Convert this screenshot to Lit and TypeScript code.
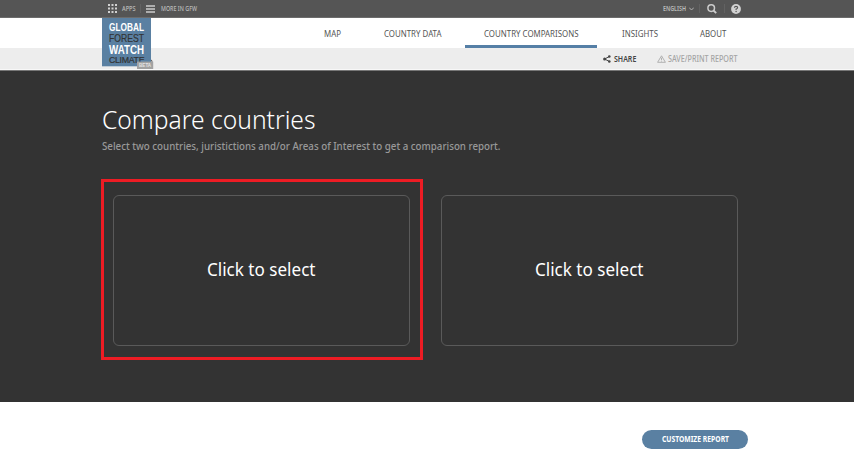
import { LitElement, html, css } from "lit";
import { customElement, property } from "lit/decorators.js";
import { classMap } from "lit/directives/class-map.js";

const TABS = [
  { label: "MAP", cls: "map", width: 17 },
  { label: "COUNTRY DATA", cls: "data", width: 57.5 },
  { label: "COUNTRY COMPARISONS", cls: "compare", width: 94.5 },
  { label: "INSIGHTS", cls: "insights", width: 36 },
  { label: "ABOUT", cls: "about", width: 26.3 },
];

/* One line of text set to a fixed measure; size, weight and colour are inherited. */
@customElement("fit-text")
class FitText extends LitElement {
  static styles = css`
    :host { display: block; flex: none; }
    svg { display: block; overflow: visible; height: 1.4em; }
    text { fill: currentColor; }
  `;
  @property() text = "";
  @property({ type: Number }) measure = 0;
  render() {
    return html`<svg width=${this.measure}><text x="0" y="1.06em" textLength=${this.measure} lengthAdjust="spacingAndGlyphs">${this.text}</text></svg>`;
  }
}

@customElement("gfw-header")
class GfwHeader extends LitElement {
  static styles = css`
    :host { display: block; position: relative; }
    .top { box-sizing: border-box; height: 18px; background: #555; border-bottom: 1px solid #6c6c6c; display: flex; align-items: center; padding: 0 113px 0 108px; color: #bcbcbc; font-size: 6.2px; font-weight: 500; }
    svg { display: block; flex: none; }
    .apps { margin-left: 5.2px; }
    .menu { margin-left: 5.5px; }
    .more { margin-left: 6px; }
    .lang { margin-left: auto; font-weight: 600; }
    .chev { margin: 0 5px 0 3px; }
    .sep { width: 1px; height: 9px; background: #626262; }
    .sep.first { margin-left: 4.3px; }
    .search { margin: 0 7px; }
    .help { margin-left: 6px; }
    .nav { height: 30px; background: #fff; display: flex; padding-left: 305px; gap: 5px; }
    .tab { box-sizing: border-box; display: flex; align-items: center; justify-content: center; height: 30px; font-size: 8.8px; color: #555; border-bottom: 3px solid transparent; padding-top: 4.5px; }
    .map { width: 54px; } .data { width: 96px; margin-left: 1px; } .compare { width: 132px; margin-left: -1px; } .insights { width: 75px; } .about { width: 63px; }
    .active { border-color: #557fa6; }
    .sub { box-sizing: border-box; height: 23px; background: #ededed; border-bottom: 1px solid #777; box-shadow: inset 0 -1px #f8f8f8; display: flex; align-items: center; padding-left: 603px; font-size: 8px; font-weight: 600; color: #444; }
    .share { margin: 0.5px 0 0 2.5px; }
    .warn { margin: 0 2px 0 21px; }
    .save { color: #a4a4a4; font-weight: 500; margin-top: 0.5px; }
    .logo { position: absolute; left: 102px; top: 18px; overflow: visible; }
  `;
  render() {
    return html`
      <div class="top">
        <svg width="9" height="9" viewBox="0 0 9 9">
          <path d="M1 0V9M4.5 0V9M8 0V9" stroke="#d2d2d2" stroke-width="2" stroke-dasharray="2 1.5"/>
        </svg>
        <fit-text class="apps" text="APPS" measure="13.5"></fit-text>
        <i class="sep first"></i>
        <svg class="menu" width="9" height="8"><path d="M0 1h9M0 4h9M0 7h9" stroke="#ccc" stroke-width="1.6"/></svg>
        <fit-text class="more" text="MORE IN GFW" measure="36"></fit-text>
        <fit-text class="lang" text="ENGLISH" measure="23"></fit-text>
        <svg class="chev" width="5" height="4"><path d="M.2 .6L2.5 3L4.8 .6" fill="none" stroke="#bbb" stroke-width=".9"/></svg>
        <i class="sep"></i>
        <svg class="search" width="10" height="10"><circle cx="4.2" cy="4.1" r="3.3" fill="none" stroke="#ccc" stroke-width="1.5"/><path d="M6.5 6.5L9.2 9.2" stroke="#ccc" stroke-width="1.8"/></svg>
        <i class="sep"></i>
        <svg class="help" width="10" height="10"><circle cx="5" cy="5" r="4.9" fill="#d2d2d2"/><path d="M3.4 3.8Q3.5 2.4 5 2.4Q6.6 2.4 6.6 3.7Q6.6 4.5 5.1 5.1V6" fill="none" stroke="#555" stroke-width="1.1"/><circle cx="5.1" cy="7.5" r=".7" fill="#555"/></svg>
      </div>
      <div class="nav">
        ${TABS.map((t) => html`<div class=${classMap({ tab: true, [t.cls]: true, active: t.cls === "compare" })}><fit-text .text=${t.label} .measure=${t.width}></fit-text></div>`)}
      </div>
      <div class="sub">
        <svg width="8" height="8"><path d="M6.3 1.5L1.7 4L6.3 6.5" fill="none" stroke="#444" stroke-width="1"/><circle cx="6.3" cy="1.5" r="1.3" fill="#444"/><circle cx="1.6" cy="4" r="1.5" fill="#444"/><circle cx="6.3" cy="6.5" r="1.3" fill="#444"/></svg>
        <fit-text class="share" text="SHARE" measure="22.3"></fit-text>
        <svg class="warn" width="9" height="8"><path d="M4.5 .8L8.4 7.3H.6Z" fill="none" stroke="#aaa" stroke-width=".9" stroke-linejoin="round"/><path d="M4.5 2.7V5M4.5 5.7V6.5" stroke="#aaa" stroke-width=".9"/></svg>
        <fit-text class="save" text="SAVE/PRINT REPORT" measure="69.5"></fit-text>
      </div>
      <svg class="logo" width="53" height="52" viewBox="0 0 53 52" font-family="Liberation Sans, sans-serif">
        <rect width="49" height="48.3" fill="#5a80a2"/>
        <text x="7" y="13.3" font-size="11.3" font-weight="700" fill="#fff" textLength="35" lengthAdjust="spacingAndGlyphs">GLOBAL</text>
        <text x="7" y="24" font-size="11.4" fill="#333" stroke="#333" stroke-width=".2" textLength="35" lengthAdjust="spacingAndGlyphs">FOREST</text>
        <text x="7" y="36" font-size="12.4" font-weight="700" fill="#fff" textLength="35" lengthAdjust="spacingAndGlyphs">WATCH</text>
        <text x="7" y="44.6" font-size="8.8" font-family="Liberation Sans Narrow, Liberation Sans, sans-serif" fill="#333" stroke="#333" stroke-width=".2" textLength="35.5">CLIMATE</text>
        <path d="M49 41.5L51 43.5H49Z" fill="#555"/>
        <rect x="35" y="43.6" width="16.2" height="7.4" fill="#a2a2a2"/>
        <text x="37" y="49.4" font-size="5.8" font-weight="700" fill="#e4e4e4" textLength="12.2" lengthAdjust="spacingAndGlyphs">BETA</text>
      </svg>`;
  }
}

@customElement("country-card")
class CountryCard extends LitElement {
  static styles = css`
    :host { box-sizing: border-box; display: flex; align-items: center; justify-content: center; width: 297px; height: 151px; border: 1px solid #5a5a5a; border-radius: 6px; color: #fff; font-size: 17.8px; padding-bottom: 3px; }
  `;
  render() {
    return html`<fit-text text="Click to select" measure="108.5"></fit-text>`;
  }
}

@customElement("app-root")
class AppRoot extends LitElement {
  static styles = css`
    :host { display: flex; flex-direction: column; height: 470px; background: #fff; font-family: "Noto Sans", "Open Sans", sans-serif; overflow: hidden; }
    .main { position: relative; box-sizing: border-box; height: 331px; background: #333; padding: 31px 0 0 102px; }
    h1 { margin: 0; height: 34px; font-size: 25px; font-weight: 300; color: #fff; }
    p { margin: 2px 0 0; height: 17px; font-size: 11px; font-weight: 500; color: #999; }
    .cards { display: flex; gap: 31px; margin: 40px 0 0 11px; }
    .highlight { position: absolute; box-sizing: border-box; left: 101px; top: 108px; width: 322px; height: 181px; border: 3px solid #ed1c24; }
    .foot { display: flex; justify-content: flex-end; padding: 28px 106px 0 0; }
    button { display: flex; align-items: center; justify-content: center; border: 0; padding: 0; width: 106px; height: 19px; border-radius: 10px; background: #5a80a2; color: #fff; font: 700 8px "Noto Sans", sans-serif; }
  `;
  render() {
    return html`
      <gfw-header></gfw-header>
      <div class="main">
        <h1><fit-text text="Compare countries" measure="213.5"></fit-text></h1>
        <p><fit-text text="Select two countries, juristictions and/or Areas of Interest to get a comparison report." measure="398.5"></fit-text></p>
        <div class="cards">
          <country-card></country-card>
          <country-card></country-card>
        </div>
        <div class="highlight"></div>
      </div>
      <div class="foot"><button><fit-text text="CUSTOMIZE REPORT" measure="67"></fit-text></button></div>`;
  }
}
